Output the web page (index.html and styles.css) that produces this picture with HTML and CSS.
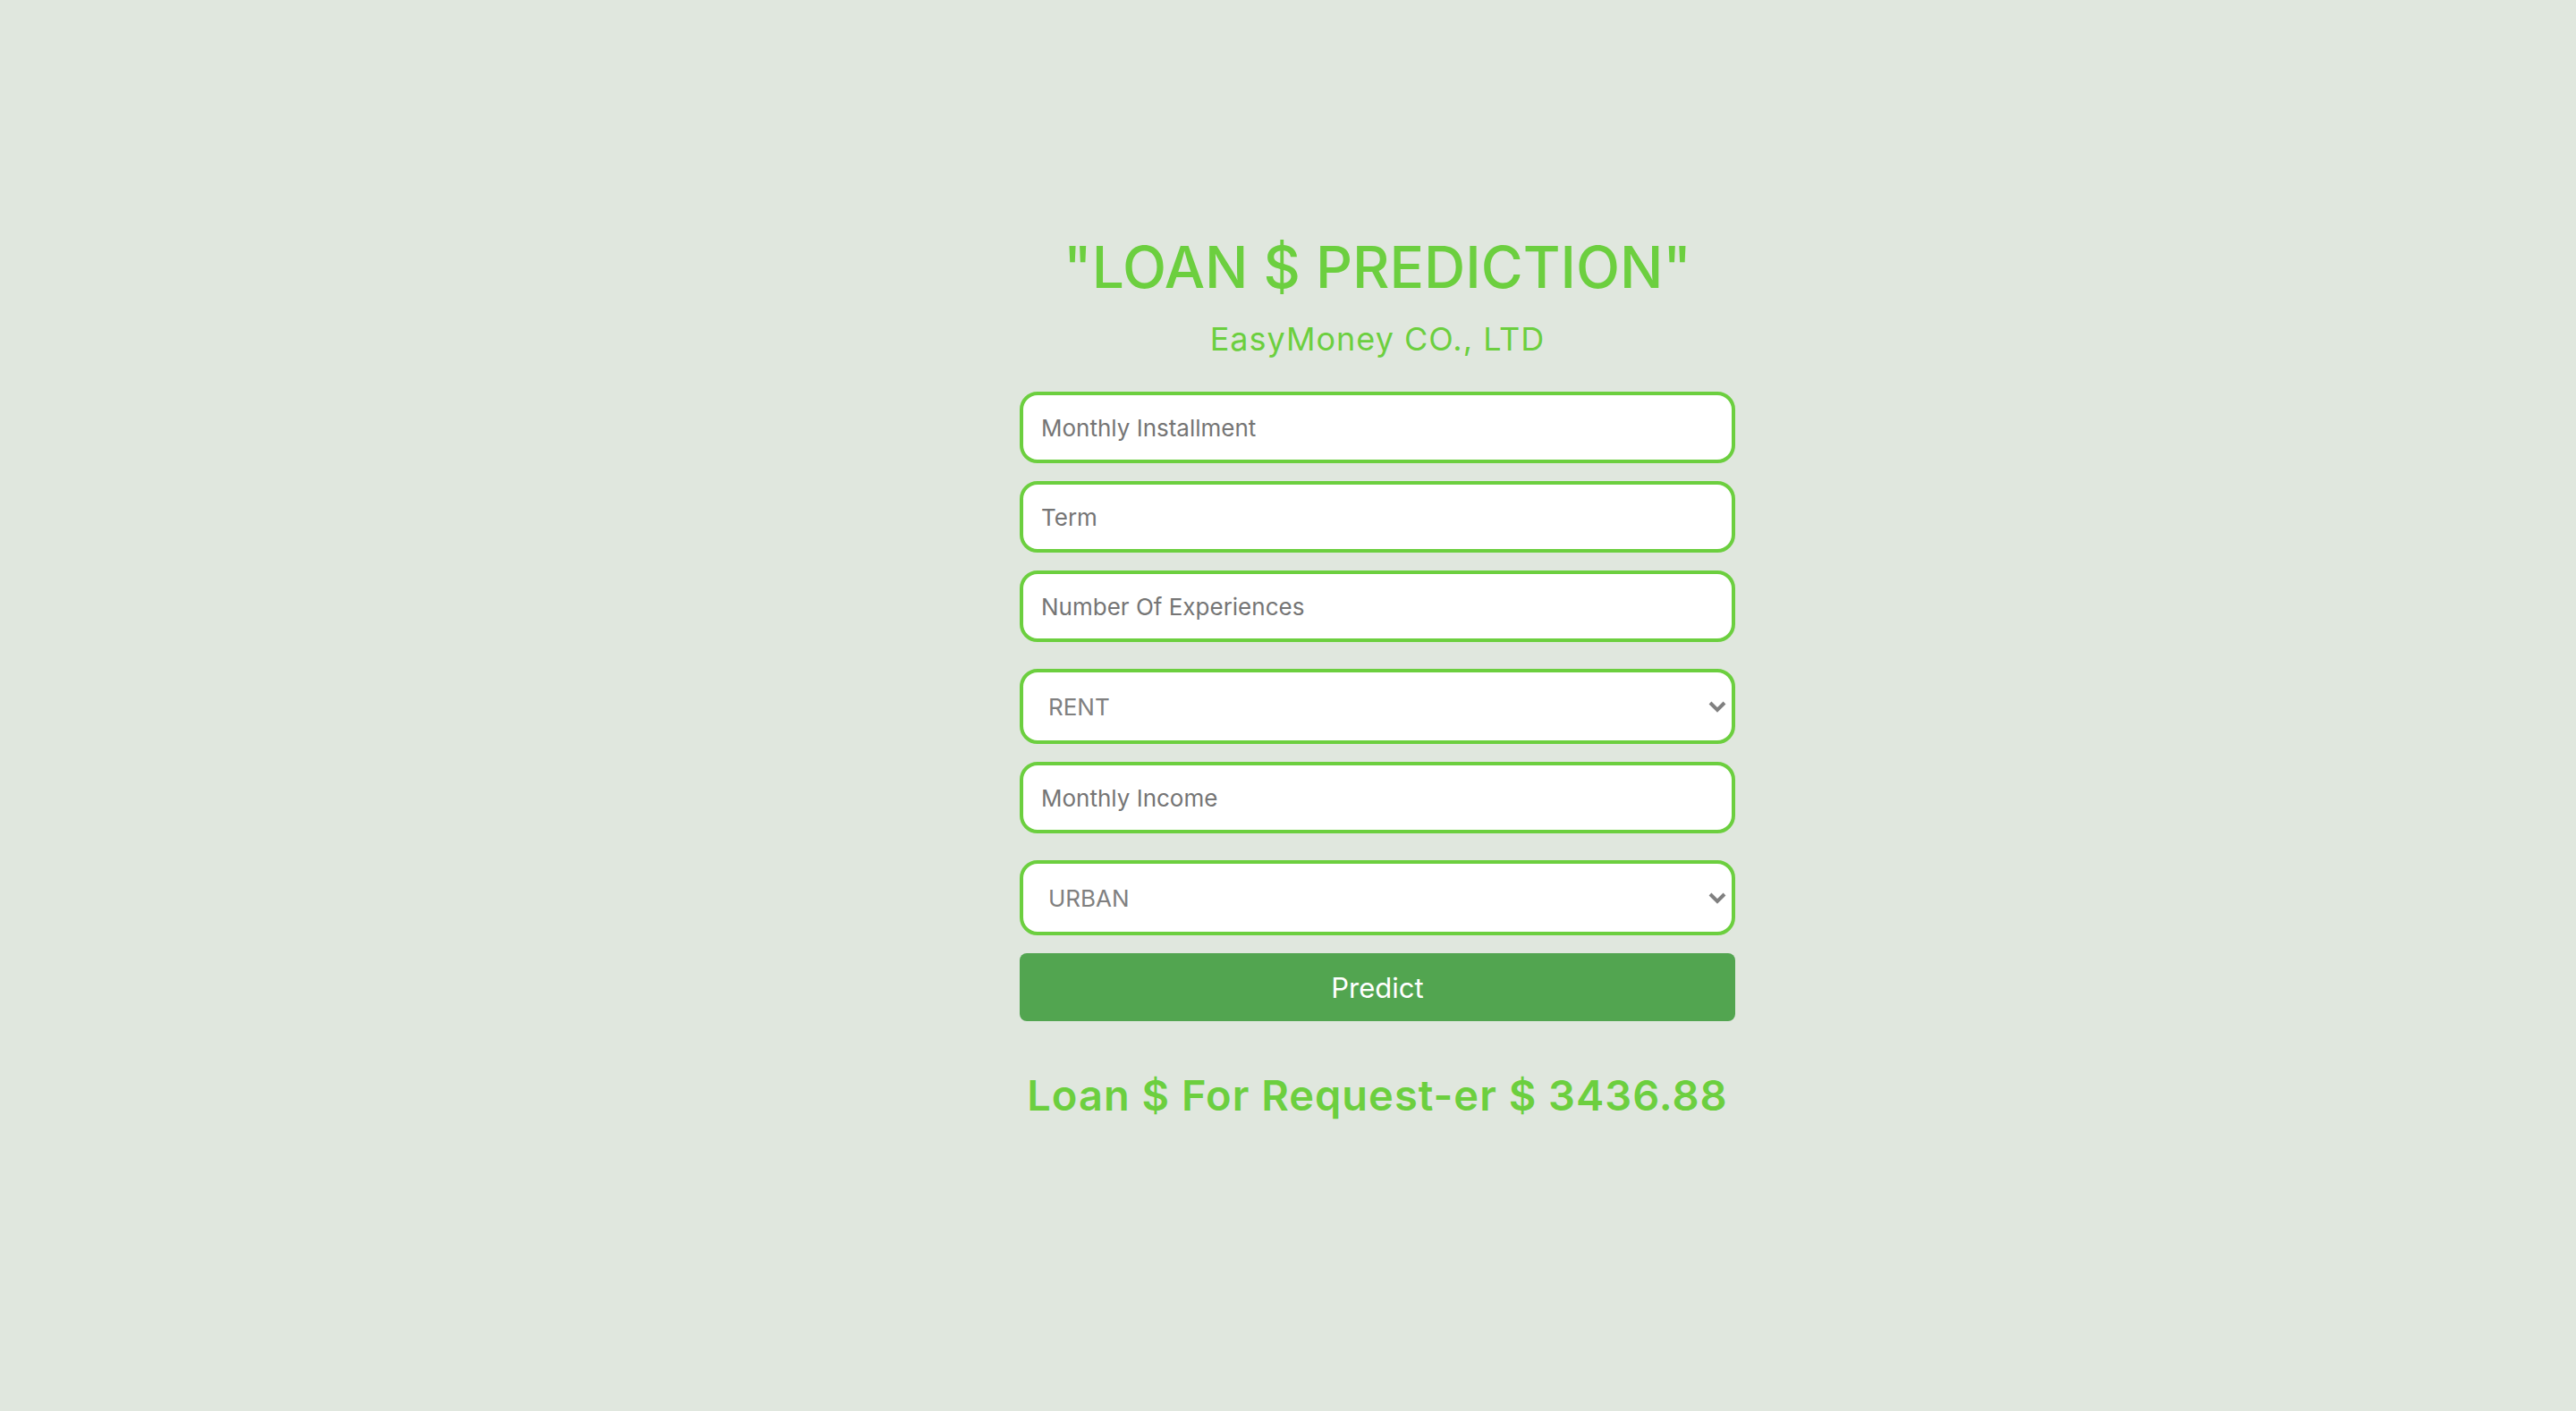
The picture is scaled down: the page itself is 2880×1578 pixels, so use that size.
FILE: index.html
```html
<!DOCTYPE html>
<html lang="en">
<head>
  <meta charset="utf-8">
  <meta name="viewport" content="width=device-width, initial-scale=1">
  <title>Loan $ Prediction</title>
  <link rel="stylesheet" href="styles.css">
</head>
<body>
  <main class="page">
    <div class="login">
      <h1 class="title">"LOAN $ PREDICTION"</h1>
      <p class="company">EasyMoney CO., LTD</p>
      <form class="form" action="#" method="post">
        <input class="field" type="text" name="installment" placeholder="Monthly Installment" aria-label="Monthly Installment">
        <input class="field" type="text" name="term" placeholder="Term" aria-label="Term">
        <input class="field" type="text" name="experiences" placeholder="Number Of Experiences" aria-label="Number Of Experiences">
        <div class="picker">
          <select class="field field-select" name="home" aria-label="Home ownership">
            <option>RENT</option>
          </select>
          <svg class="chevron" viewBox="0 0 20 14" aria-hidden="true"><path d="M2 3 L10 11 L18 3"/></svg>
        </div>
        <input class="field" type="text" name="income" placeholder="Monthly Income" aria-label="Monthly Income">
        <div class="picker">
          <select class="field field-select" name="area" aria-label="Area">
            <option>URBAN</option>
          </select>
          <svg class="chevron" viewBox="0 0 20 14" aria-hidden="true"><path d="M2 3 L10 11 L18 3"/></svg>
        </div>
        <button class="submit" type="submit">Predict</button>
      </form>
      <p class="result">Loan $ For Request-er $ 3436.88</p>
    </div>
  </main>
</body>
</html>
```

FILE: styles.css
```css
* {
  box-sizing: border-box;
}

body {
  margin: 0;
  min-height: 100vh;
  background: #e0e7de;
  color: #6ccf3f;
  font-family: Inter, "Liberation Sans", sans-serif;
}

.page {
  display: flex;
  justify-content: center;
  padding: 260px 0 80px 200px;
}

.login {
  width: 100%;
  max-width: 800px;
  text-align: center;
}

.title {
  margin: 0;
  font-size: 64px;
  font-weight: 500;
  line-height: 78px;
}

.company {
  margin: 19px 0 37px;
  font-size: 36px;
  line-height: 44px;
  letter-spacing: 1px;
}

.form {
  display: flex;
  flex-direction: column;
  gap: 20px;
}

.field {
  width: 100%;
  height: 80px;
  padding: 0 20px;
  border: 4px solid #6ccf3f;
  border-radius: 20px;
  background: #fff;
  font: 400 26px/32px Inter, "Liberation Sans", sans-serif;
}

.field::placeholder {
  color: #757575;
  opacity: 1;
}

.picker {
  display: grid;
  align-items: center;
  margin-top: 10px;
}

.field-select {
  grid-area: 1 / 1;
  height: 84px;
  padding: 2px 28px 0;
  color: #808080;
  appearance: none;
}

.chevron {
  grid-area: 1 / 1;
  justify-self: end;
  width: 20px;
  height: 14px;
  margin-right: 10px;
  fill: none;
  stroke: #808080;
  stroke-width: 4;
  pointer-events: none;
}

.submit {
  height: 76px;
  padding: 2px 0 0;
  border: 0;
  border-radius: 8px;
  background: #52a550;
  color: #fff;
  font: 400 31px/40px Inter, "Liberation Sans", sans-serif;
}

.result {
  margin: 54px 0 0;
  font-size: 47px;
  font-weight: 600;
  line-height: 58px;
  letter-spacing: 1px;
}
```
